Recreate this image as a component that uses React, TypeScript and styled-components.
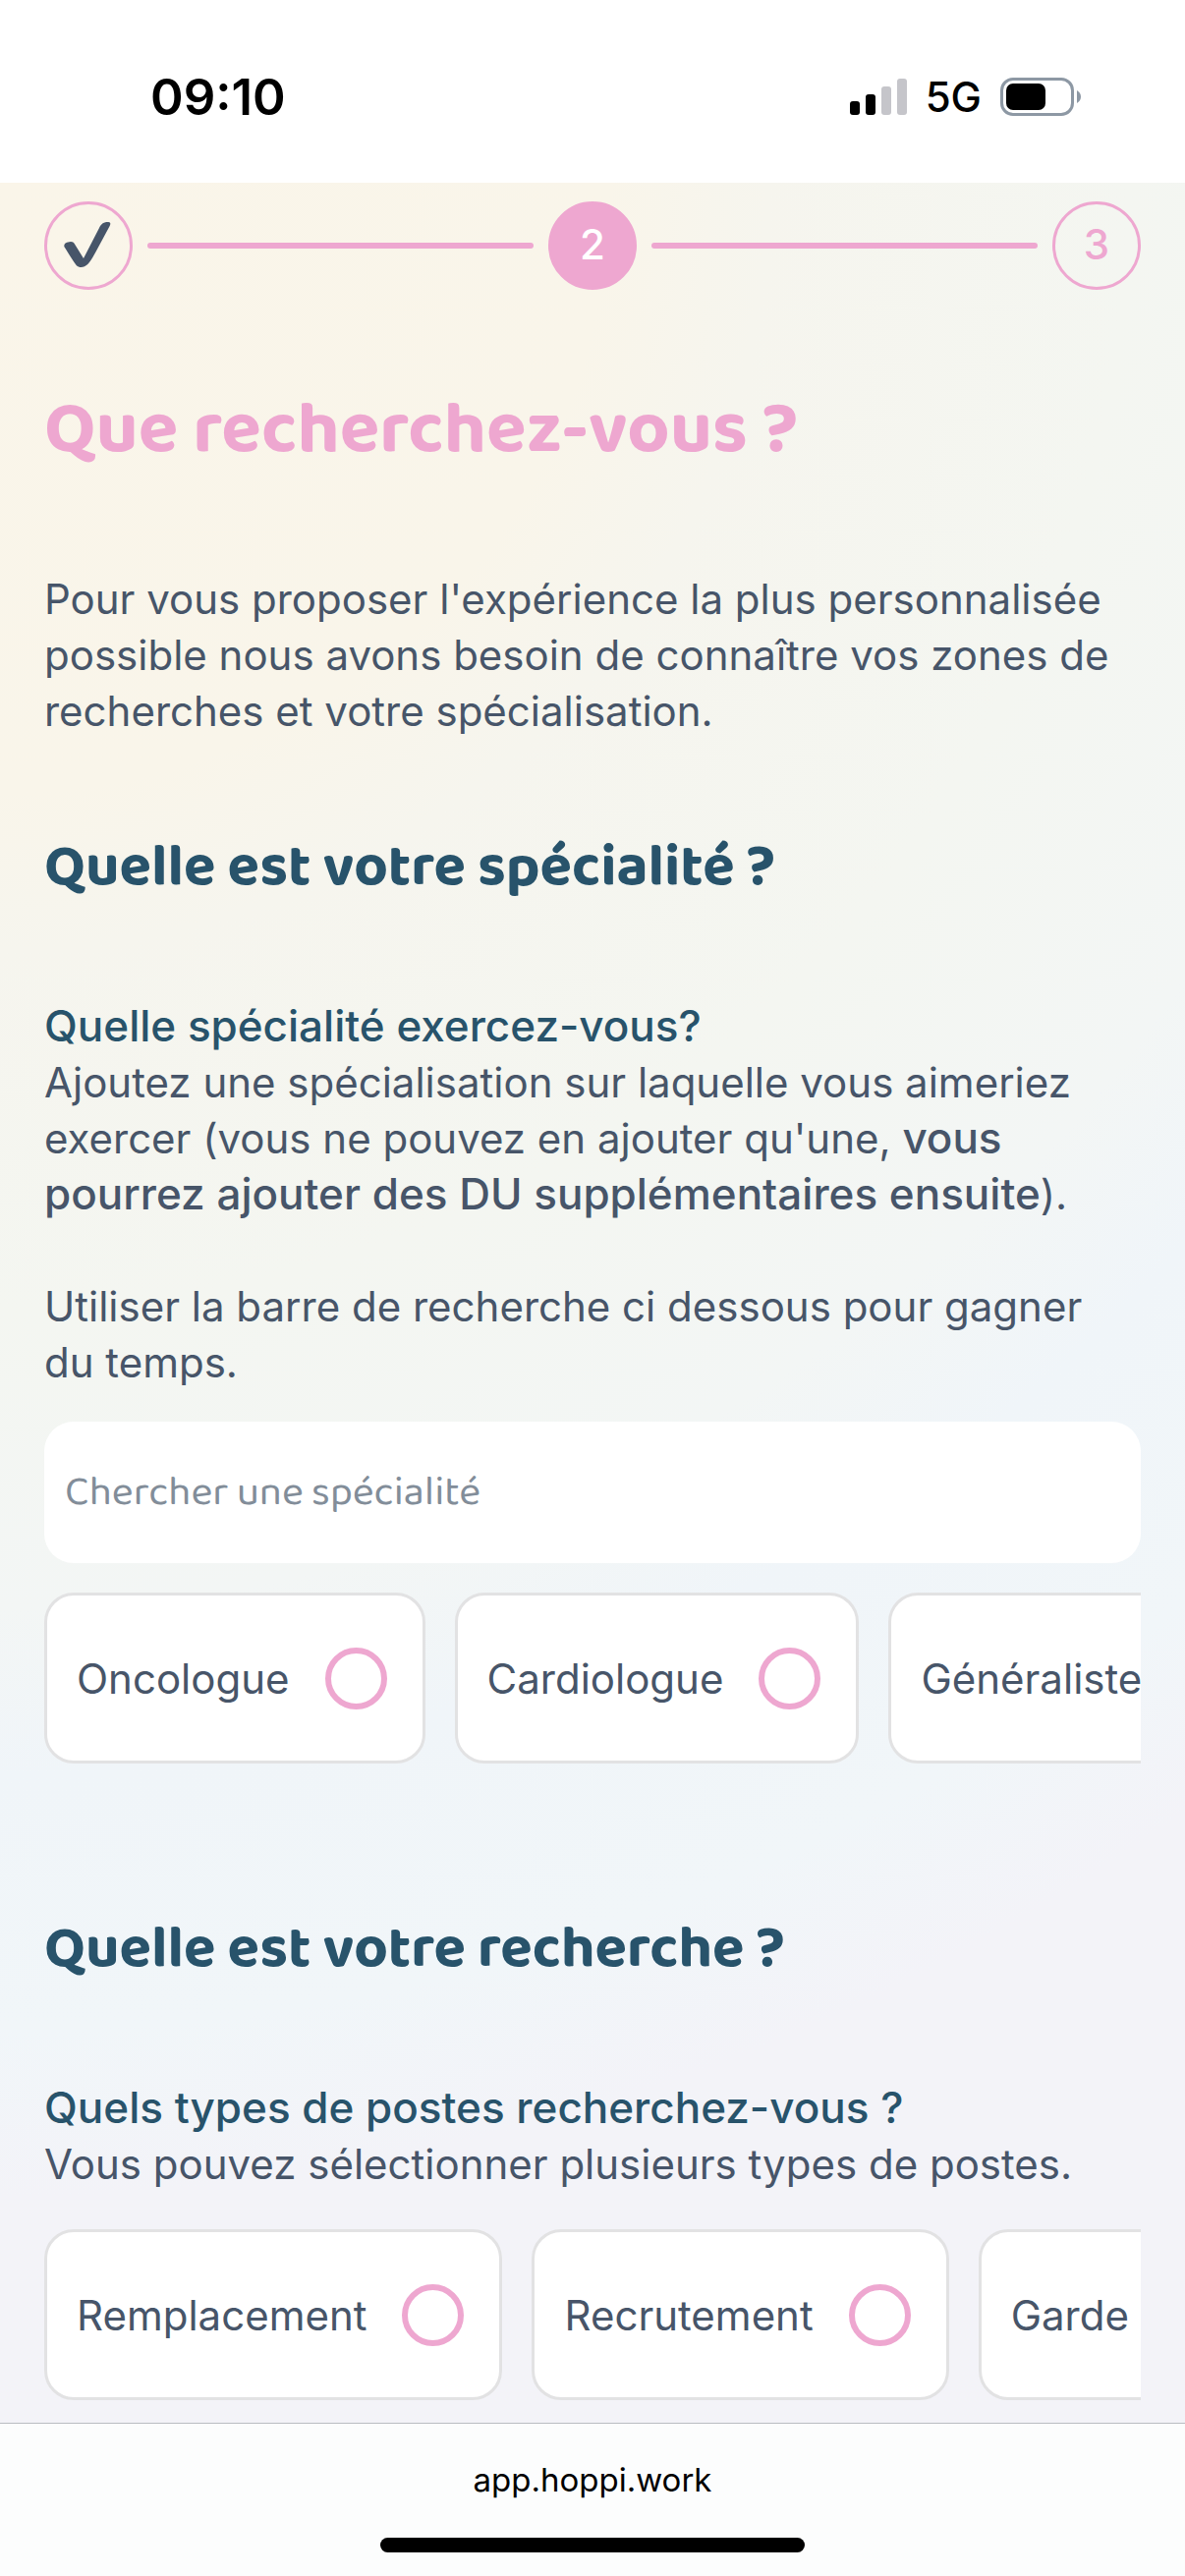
import React from "react";
import styled, { createGlobalStyle } from "styled-components";

const pink = "#eea7d0";
const navy = "#28536b";
const slate = "#475569";
const display = `"Baloo 2", "Open Sans", "Noto Sans", sans-serif`;
const body = `Inter, "Noto Sans", sans-serif`;

const GlobalStyle = createGlobalStyle`
  *, *::before, *::after { box-sizing: border-box; }
  body { margin: 0; background: #fff; }
`;

const Page = styled.div`
  min-height: 100vh;
  display: flex;
  flex-direction: column;
  font-family: ${body};
  font-size: 42px;
  line-height: 57px;
  color: ${slate};
`;

const StatusBar = styled.header`
  height: 186px;
  padding: 10px 106px 0 153px;
  display: flex;
  align-items: center;
  justify-content: space-between;
  background: #fff;
  color: #000;
`;

const Time = styled.time`
  font-size: 51px;
  font-weight: 600;
`;

const Indicators = styled.div`
  display: flex;
  align-items: center;
  gap: 19px;
  font-weight: 500;

  svg {
    display: block;
  }
`;

const Main = styled.main`
  flex: 1;
  padding: 19px 45px 23px;
  background: radial-gradient(
    circle at 0 0,
    #faf5e9 0,
    #f9f5ea 620px,
    #f6f5ee 780px,
    #f4f6f1 1150px,
    #f3f6f5 1450px,
    #f0f5f9 1620px,
    #f1f6f9 1880px,
    #f3f3f8 2050px,
    #f3f3f8 100%
  );
`;

const Steps = styled.ol`
  margin: 0;
  padding: 0;
  list-style: none;
  display: flex;
  align-items: center;
  gap: 15px;
`;

const Step = styled.li<{ $active?: boolean }>`
  width: 90px;
  height: 90px;
  border: 3px solid ${pink};
  border-radius: 50%;
  display: flex;
  align-items: center;
  justify-content: center;
  flex: none;
  line-height: 54px;
  padding-bottom: 2px;
  font-weight: 500;
  background: ${(p) => (p.$active ? pink : "transparent")};
  color: ${(p) => (p.$active ? "#fff" : pink)};

  svg {
    flex: none;
  }
`;

const StepLine = styled.li`
  flex: 1;
  height: 6px;
  border-radius: 3px;
  background: ${pink};
`;

const Title = styled.h1`
  margin: 90px 0;
  font-family: ${display};
  font-size: 75px;
  line-height: 106px;
  font-weight: 700;
  color: ${pink};
`;

const Text = styled.p`
  margin: 0;
`;

const Strong = styled.strong`
  font-size: 44px;
  line-height: 54px;
  font-weight: 500;
`;

const Section = styled.section`
  & + & {
    margin-top: 142px;
  }
`;

const SectionTitle = styled.h2`
  margin: 0 0 86px;
  font-family: ${display};
  font-size: 60px;
  line-height: 94px;
  font-weight: 700;
  color: ${navy};
`;

const Intro = styled(Text)`
  margin-bottom: 84px;
`;

const Question = styled.h3`
  margin: 0;
  font-size: 44px;
  line-height: 57px;
  font-weight: 500;
  color: ${navy};
`;

const Hint = styled(Text)`
  margin-top: 57px;
`;

const Search = styled.input`
  display: block;
  width: 100%;
  height: 144px;
  margin-top: 32px;
  padding: 0 21px;
  border: 0;
  border-radius: 30px;
  background: #fff;
  font-family: ${display};
  font-size: 42px;
  color: ${slate};

  &::placeholder {
    color: #828d99;
    opacity: 1;
  }
`;

const Options = styled.div`
  margin-top: 30px;
  display: flex;
  gap: 30px;
  overflow: hidden;

  ${Text} + & {
    margin-top: 38px;
  }
`;

const Option = styled.label`
  flex: none;
  height: 174px;
  padding: 0 36px 0 30px;
  display: flex;
  align-items: center;
  gap: 36px;
  border: 3px solid #e2e2e3;
  border-radius: 30px;
  background: #fff;
  white-space: nowrap;
`;

const Choice = styled.input`
  appearance: none;
  width: 63px;
  height: 63px;
  margin: 0;
  border: 6px solid ${pink};
  border-radius: 50%;
  background: #fff;

  &:checked {
    background: ${pink};
  }
`;

const BrowserBar = styled.footer`
  height: 156px;
  padding: 30px 0 24px;
  display: flex;
  flex-direction: column;
  align-items: center;
  justify-content: space-between;
  border-top: 1px solid #b9bcc2;
  background: #fcfdfd;
  color: #000;
`;

const Address = styled.span`
  font-size: 33px;
  line-height: 54px;
`;

const HomeIndicator = styled.div`
  width: 432px;
  height: 15px;
  border-radius: 8px;
  background: #000;
`;

const CheckMark = () => (
  <svg width="84" height="84" viewBox="84 51 252 252" aria-hidden="true">
    <path
      fill={slate}
      d="M136 183C135 173 143 169 156 168C163 168 166 171 169 177L195 219L243 126C249 113 257 108 271 108C278 108 278 114 275 120L233 198C219 224 211 237 198 244C189 248 180 247 173 240C160 223 149 203 136 183Z"
    />
  </svg>
);

const Signal = () => (
  <svg width="58" height="38" viewBox="0 0 58 38" aria-hidden="true">
    <rect x="0" y="24" width="10" height="14" rx="3" />
    <rect x="16" y="17" width="10" height="21" rx="3" />
    <rect x="32" y="9" width="10" height="29" rx="3" fill="#c5c5ca" />
    <rect x="48" y="1" width="10" height="37" rx="3" fill="#c5c5ca" />
  </svg>
);

const Battery = () => (
  <svg width="82" height="39" viewBox="0 0 82 39" aria-hidden="true">
    <rect x="1.5" y="1.5" width="72" height="36" rx="11.5" fill="none" stroke="#8d98a4" strokeWidth="3" />
    <rect x="6" y="6" width="40" height="27" rx="7" />
    <path d="M78 13C81 15 82 17 82 19.500C82 22 81 24 78 26Z" fill="#8d98a4" />
  </svg>
);

type OptionRowProps = {
  labels: string[];
  kind: "radio" | "checkbox";
  name: string;
  labelledBy: string;
};

const OptionRow = ({ labels, kind, name, labelledBy }: OptionRowProps) => (
  <Options role="group" aria-labelledby={labelledBy}>
    {labels.map((label) => (
      <Option key={label}>
        {label}
        <Choice type={kind} name={name} value={label} />
      </Option>
    ))}
  </Options>
);

export default function App() {
  return (
    <Page>
      <GlobalStyle />
      <StatusBar>
        <Time>09:10</Time>
        <Indicators>
          <Signal />
          <span>5G</span>
          <Battery />
        </Indicators>
      </StatusBar>
      <Main>
        <Steps>
          <Step>
            <CheckMark />
          </Step>
          <StepLine aria-hidden="true" />
          <Step $active aria-current="step">
            2
          </Step>
          <StepLine aria-hidden="true" />
          <Step>3</Step>
        </Steps>
        <Title>Que recherchez-vous ?</Title>
        <Intro>
          Pour vous proposer l'expérience la plus personnalisée possible nous
          avons besoin de connaître vos zones de recherches et votre
          spécialisation.
        </Intro>
        <Section>
          <SectionTitle>Quelle est votre spécialité ?</SectionTitle>
          <Question id="specialite">Quelle spécialité exercez-vous?</Question>
          <Text>
            Ajoutez une spécialisation sur laquelle vous aimeriez exercer (vous
            ne pouvez en ajouter qu'une,{" "}
            <Strong>vous pourrez ajouter des DU supplémentaires ensuite</Strong>
            ).
          </Text>
          <Hint>
            Utiliser la barre de recherche ci dessous pour gagner du temps.
          </Hint>
          <Search
            type="search"
            aria-labelledby="specialite"
            placeholder="Chercher une spécialité"
          />
          <OptionRow
            kind="radio"
            name="specialite"
            labelledBy="specialite"
            labels={["Oncologue", "Cardiologue", "Généraliste"]}
          />
        </Section>
        <Section>
          <SectionTitle>Quelle est votre recherche ?</SectionTitle>
          <Question id="postes">Quels types de postes recherchez-vous ?</Question>
          <Text>Vous pouvez sélectionner plusieurs types de postes.</Text>
          <OptionRow
            kind="checkbox"
            name="postes"
            labelledBy="postes"
            labels={["Remplacement", "Recrutement", "Garde"]}
          />
        </Section>
      </Main>
      <BrowserBar>
        <Address>app.hoppi.work</Address>
        <HomeIndicator />
      </BrowserBar>
    </Page>
  );
}
